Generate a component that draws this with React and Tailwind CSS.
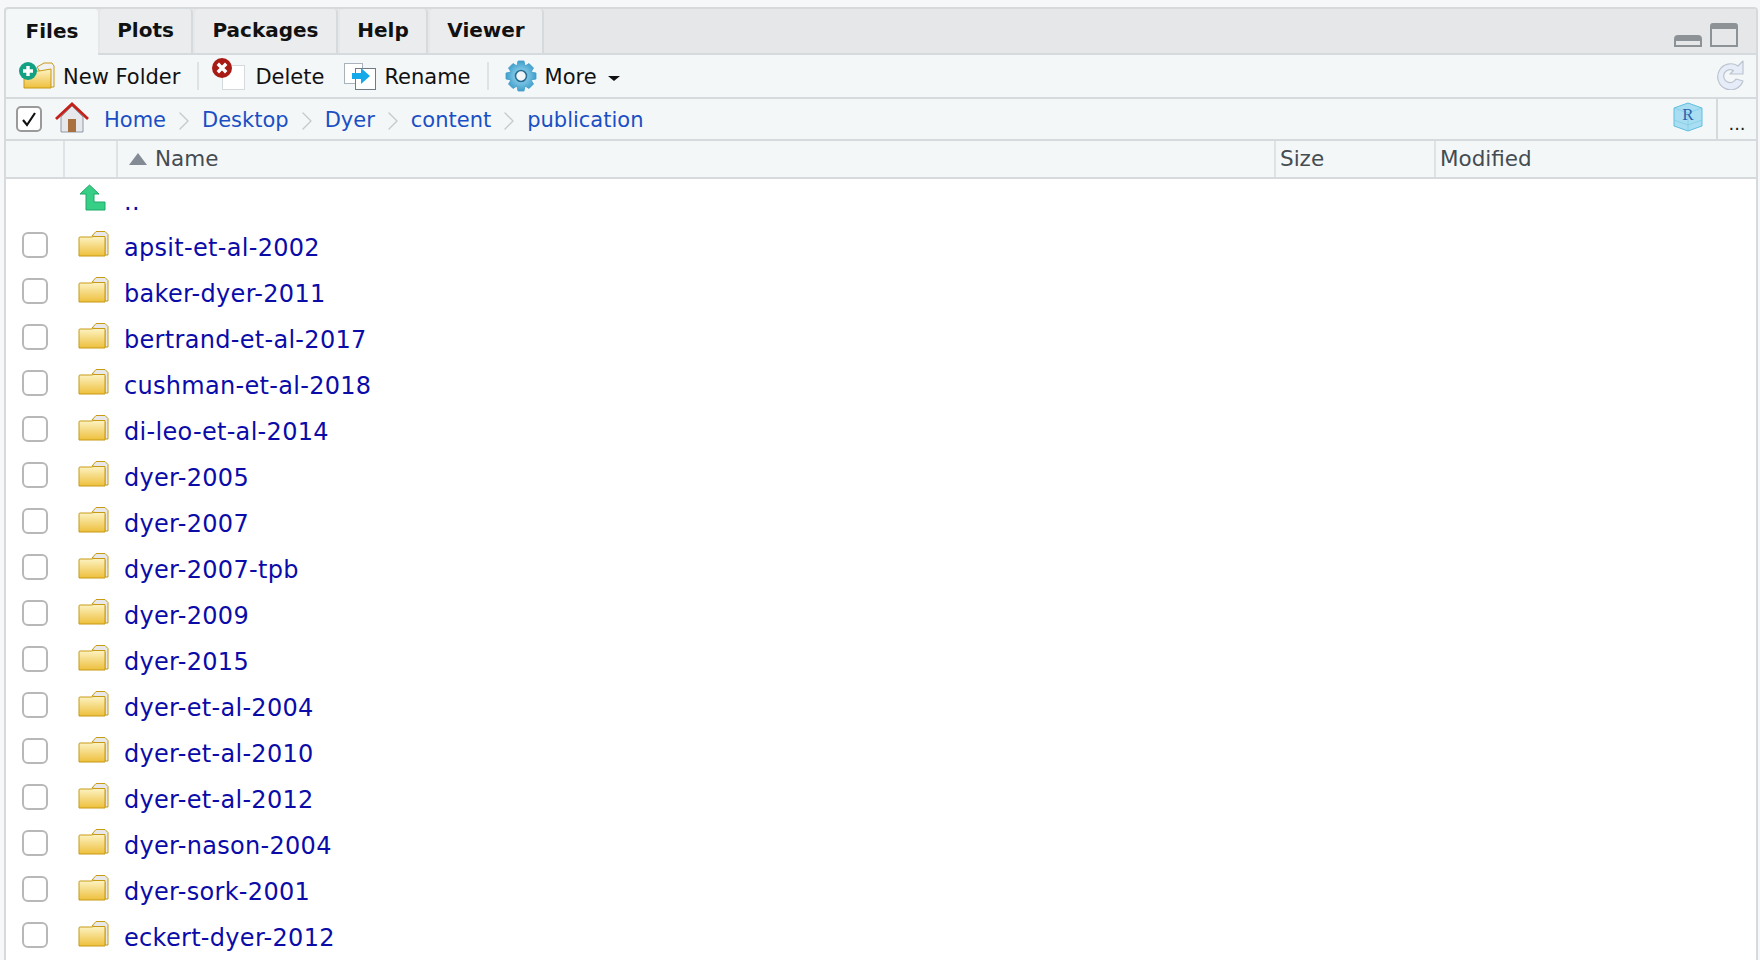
import { ChevronRight } from "lucide-react";

const font = { fontFamily: '"DejaVu Sans", sans-serif' };

const folders = [
  "apsit-et-al-2002",
  "baker-dyer-2011",
  "bertrand-et-al-2017",
  "cushman-et-al-2018",
  "di-leo-et-al-2014",
  "dyer-2005",
  "dyer-2007",
  "dyer-2007-tpb",
  "dyer-2009",
  "dyer-2015",
  "dyer-et-al-2004",
  "dyer-et-al-2010",
  "dyer-et-al-2012",
  "dyer-nason-2004",
  "dyer-sork-2001",
  "eckert-dyer-2012",
];

const tabs = [
  { name: "Files", w: "w-[92px]" },
  { name: "Plots", w: "w-[93px]" },
  { name: "Packages", w: "w-[143px]" },
  { name: "Help", w: "w-[88px]" },
  { name: "Viewer", w: "w-[114px]" },
];

const crumbs = ["Home", "Desktop", "Dyer", "content", "publication"];

function FolderIcon({ className }) {
  return (
    <svg viewBox="0 0 31 27" className={className}>
      <defs>
        <linearGradient id="fold" x1="0" y1="0" x2="0" y2="1">
          <stop offset="0" stopColor="#fdf3c4" />
          <stop offset="1" stopColor="#eebf3c" />
        </linearGradient>
      </defs>
      <path d="M14 6 L18 1.5 H27 L30 4.5 V25 H27 V8 Z" fill="#e8e8e8" stroke="#c79a16" strokeWidth="1" />
      <path d="M1 8 Q1 7 2 7 H13 L16 6.5 H27 V26 H1 Z" fill="url(#fold)" stroke="#c79a16" strokeWidth="1" />
    </svg>
  );
}

function UpArrow() {
  return (
    <svg viewBox="0 0 27 27" className="h-[27px] w-[27px]">
      <path d="M10.5 1 L20 10 H15 V18 H26 V26 H7 V10 H1 Z" fill="#36cf85" stroke="#1fa868" strokeWidth="1" />
    </svg>
  );
}

function NewFolderIcon() {
  return (
    <svg viewBox="0 0 38 28" className="h-[28px] w-[38px]">
      <path d="M20 5 L27 1 H35 L37 4 V25 H33 Z" fill="#f2f2f2" stroke="#c79a16" />
      <path d="M7 9 H22 L34 7 V26 H7 Z" fill="url(#fold)" stroke="#c79a16" />
      <circle cx="11" cy="9" r="9" fill="#12a182" />
      <path d="M11 4 V14 M6 9 H16" stroke="#fff" strokeWidth="3.4" />
    </svg>
  );
}

function DeleteIcon() {
  return (
    <svg viewBox="0 0 34 32" className="h-[32px] w-[34px]">
      <rect x="10.5" y="7.5" width="22" height="24" fill="#fff" stroke="#d5dade" />
      <circle cx="10" cy="10" r="10" fill="#a81a14" />
      <path d="M5.8 5.8 L14.2 14.2 M14.2 5.8 L5.8 14.2" stroke="#fff" strokeWidth="3.4" />
    </svg>
  );
}

function RenameIcon() {
  return (
    <svg viewBox="0 0 32 28" className="h-[28px] w-[32px]">
      <rect x="0.5" y="1.5" width="18" height="20" fill="#fff" stroke="#a9b3bc" />
      <rect x="11.5" y="6.5" width="20" height="21" fill="#fff" stroke="#6f7b86" />
      <path d="M8 11 H17 V6 L26 14 L17 22 V17 H8 Z" fill="#14aaea" />
    </svg>
  );
}

function GearIcon() {
  return (
    <svg viewBox="0 0 32 32" className="h-[32px] w-[32px]">
      <defs>
        <radialGradient id="gear" cx="0.5" cy="0.5" r="0.6">
          <stop offset="0" stopColor="#a8dff5" />
          <stop offset="1" stopColor="#2b93c4" />
        </radialGradient>
      </defs>
      <path
        d="M13 1 H19 L20 6 L24 3.5 L28.5 8 L26 12 L31 13 V19 L26 20 L28.5 24 L24 28.5 L20 26 L19 31 H13 L12 26 L8 28.5 L3.5 24 L6 20 L1 19 V13 L6 12 L3.5 8 L8 3.5 L12 6 Z"
        fill="url(#gear)"
        stroke="#3f9cc8"
        strokeWidth="0.8"
        strokeLinejoin="round"
      />
      <circle cx="16" cy="16" r="5.5" fill="#f3f6f8" stroke="#2a6f93" strokeWidth="1.6" />
    </svg>
  );
}

function HomeIcon() {
  return (
    <svg viewBox="0 0 34 31" className="h-[31px] w-[34px]">
      <path d="M6 15 L17 4 L28 15 V30 H6 Z" fill="#e6e8ec" stroke="#8e9aa6" />
      <path d="M1 17 L17 2 L33 17" fill="none" stroke="#c4201a" strokeWidth="2.8" />
      <rect x="13" y="17" width="8" height="13" fill="#a9713f" />
    </svg>
  );
}

function ProjectIcon() {
  return (
    <svg viewBox="0 0 30 30" className="h-[30px] w-[30px]">
      <path d="M15 1 L29 6 V24 L15 29 L1 24 V6 Z" fill="#a9def2" stroke="#5fbfdf" />
      <path d="M1 6 L15 11 L29 6 M1 18 L15 23 L29 18 M15 11 V29" fill="none" stroke="#7fcde6" strokeWidth="0.8" />
      <text x="15" y="18" textAnchor="middle" fontSize="17" fill="#2b62ad" fontFamily="Liberation Serif, serif">
        R
      </text>
    </svg>
  );
}

function RefreshIcon() {
  return (
    <svg viewBox="0 0 30 31" className="h-[31px] w-[30px]">
      <path
        d="M24 7 A13 13 0 1 0 29 22 L22 20 A6.5 6.5 0 1 1 19.5 11.5 L16 15 H29 V2 Z"
        fill="#e6edf8"
        stroke="#bcc4cf"
        strokeWidth="1.2"
        strokeLinejoin="round"
      />
    </svg>
  );
}

function Divider() {
  return <div className="h-[28px] w-[2px] bg-[#dfe3e6]" />;
}

export default function App() {
  return (
    <div className="h-[960px] w-[1760px] overflow-hidden bg-[#f5f7f8] pt-[7px] pr-[2px] pl-[4px]" style={font}>
      <div className="h-full rounded-t-[4px] border-x-2 border-t-2 border-[#d6dadc] bg-white">
        {/* tab strip */}
        <div className="flex h-[46px] items-end justify-between border-b-2 border-[#d6dadc] bg-[#e6e7e9]">
          <div className="flex h-full gap-[2px]">
            {tabs.map((t, i) => (
              <div
                key={t.name}
                className={`${t.w} flex items-center justify-center rounded-t-[4px] pb-[2px] leading-none font-bold text-[#111] ${
                  i === 0 ? "relative z-10 h-[46px] bg-[#f4f7f8]" : "h-[44px] border-r-2 border-[#d6dadc] bg-[#ebecee]"
                }`}
              >
                <span className="text-[20px]">{t.name}</span>
              </div>
            ))}
          </div>
          <div className="mr-[18px] mb-[6px] flex items-end gap-[8px]">
            <div className="h-[12px] w-[28px] rounded-t-[4px] border-x-2 border-t-[6px] border-b-2 border-[#8c9295]" />
            <div className="h-[24px] w-[28px] rounded-t-[3px] border-x-2 border-t-[6px] border-b-2 border-[#8c9295]" />
          </div>
        </div>

        {/* toolbar */}
        <div className="flex h-[44px] items-center justify-between border-b-2 border-[#d6dadc] bg-[#f4f7f8] pr-[12px] pl-[11px] text-[21px] text-[#111]">
          <div className="flex items-center">
            <NewFolderIcon />
            <span className="ml-[8px] pt-[4px]">New Folder</span>
            <div className="ml-[17px]"><Divider /></div>
            <div className="mt-[-4px] ml-[13px]"><DeleteIcon /></div>
            <span className="ml-[9px] pt-[4px]">Delete</span>
            <div className="ml-[20px]"><RenameIcon /></div>
            <span className="ml-[8px] pt-[4px]">Rename</span>
            <div className="ml-[16px]"><Divider /></div>
            <div className="ml-[16px]"><GearIcon /></div>
            <span className="ml-[8px] pt-[4px]">More</span>
            <div className="mt-[4px] ml-[11px] h-0 w-0 border-x-[6px] border-t-[5px] border-x-transparent border-t-[#111]" />
          </div>
          <div className="mt-[-4px]"><RefreshIcon /></div>
        </div>

        {/* path bar */}
        <div className="flex h-[42px] items-center border-b-2 border-[#d6dadc] bg-[#f4f7f8]">
          <div className="ml-[10px] flex h-[26px] w-[26px] items-center justify-center rounded-[5px] border-2 border-[#9a9a9a] bg-white">
            <svg viewBox="0 0 16 16" className="h-[16px] w-[16px]">
              <path d="M2 9 L6 14 L14 2" fill="none" stroke="#111" strokeWidth="2.2" />
            </svg>
          </div>
          <div className="mt-[-4px] ml-[13px]"><HomeIcon /></div>
          <div className="ml-[15px] flex items-center pt-[4px] text-[21px] text-[#1a4fc4]">
            {crumbs.map((c, i) => (
              <div key={c} className="flex items-center">
                {i > 0 && <ChevronRight size={32} strokeWidth={1} className="mx-[2px] text-[#c6cacd]" />}
                <span>{c}</span>
              </div>
            ))}
          </div>
          <div className="mt-[-4px] mr-[13px] ml-auto"><ProjectIcon /></div>
          <div className="flex h-full w-[40px] items-end justify-center border-l-2 border-[#d6dadc] pb-[6px] text-[18px] leading-none text-[#222]">
            ...
          </div>
        </div>

        {/* column headers */}
        <div className="flex h-[38px] border-b-2 border-[#d6dadc] bg-[#f4f7f8] text-[21.5px] text-[#444c52]">
          <div className="h-full w-[59px] border-r-2 border-[#dfe3e6]" />
          <div className="h-full w-[53px] border-r-2 border-[#dfe3e6]" />
          <div className="flex h-full w-[1158px] items-center border-r-2 border-[#dfe3e6] pl-[11px]">
            <div className="h-0 w-0 border-x-[9px] border-b-[12px] border-x-transparent border-b-[#858b94]" />
            <span className="ml-[8px]">Name</span>
          </div>
          <div className="flex h-full w-[160px] items-center border-r-2 border-[#dfe3e6] pl-[4px]">Size</div>
          <div className="flex h-full flex-1 items-center pl-[4px]">Modified</div>
        </div>

        {/* file rows */}
        <div className="text-[24px] tracking-[0.3px] text-[#0b0ba8]">
          <div className="flex h-[44px] items-center pl-[73px]">
            <div className="mt-[-8px]"><UpArrow /></div>
            <span className="ml-[18px] pt-[2px]">..</span>
          </div>
          {folders.map((f) => (
            <div key={f} className="flex h-[46px] items-center">
              <div className="mt-[-2px] ml-[16px] h-[26px] w-[26px] rounded-[6px] border-2 border-[#b8b8b8] bg-white" />
              <FolderIcon className="mt-[-5px] ml-[30px] h-[27px] w-[31px]" />
              <span className="ml-[15px] pt-[4px]">{f}</span>
            </div>
          ))}
        </div>
      </div>
    </div>
  );
}
